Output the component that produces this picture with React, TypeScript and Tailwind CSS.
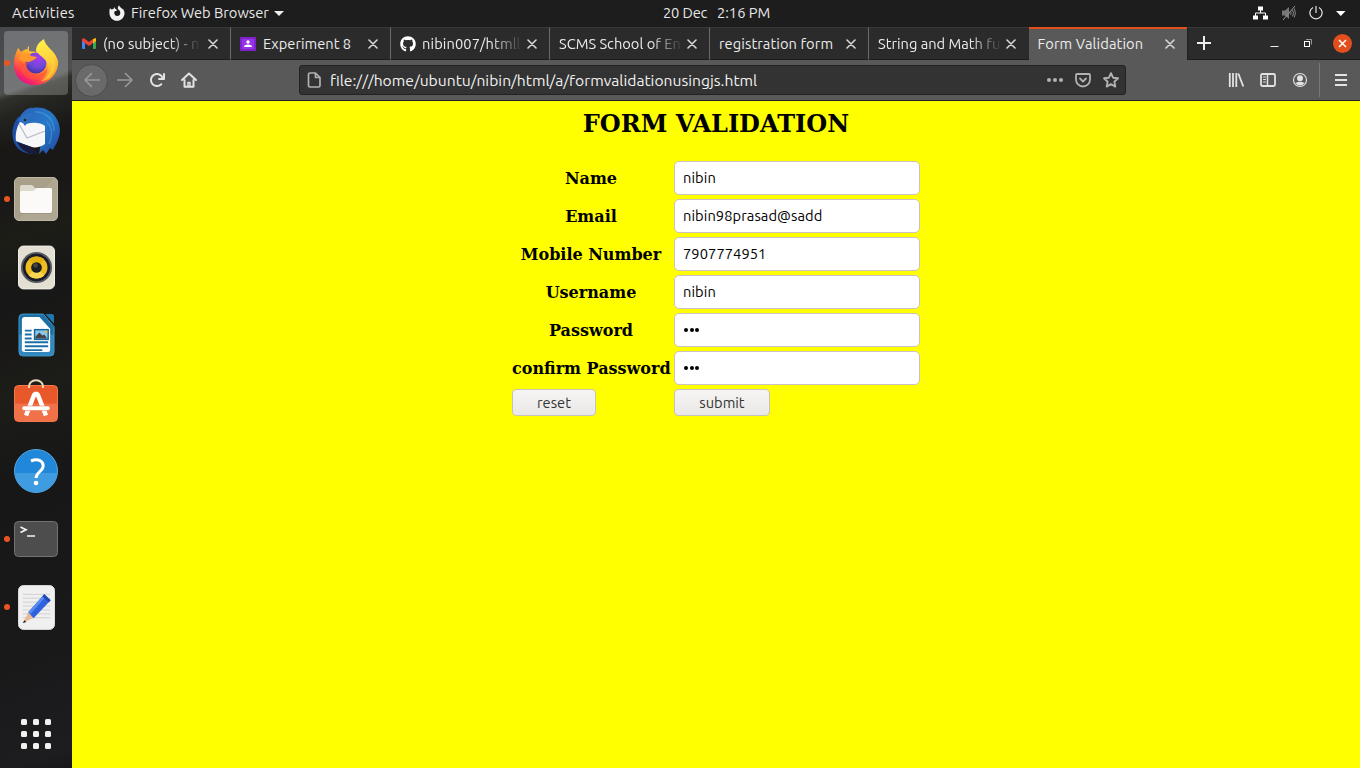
import type { ReactNode } from "react";
import { FaGithub } from "react-icons/fa";

const ui = "font-['Ubuntu','Noto_Sans',sans-serif] text-[14.667px] leading-5 whitespace-pre";

function Icon({ children, className = "", size = 16 }: { children: ReactNode; className?: string; size?: number }) {
  return (
    <svg width={size} height={size} viewBox={`0 0 ${size} ${size}`} fill="none" stroke="currentColor" strokeWidth="1.6" strokeLinecap="round" strokeLinejoin="round" className={`block shrink-0 ${className}`}>
      {children}
    </svg>
  );
}

function Close() {
  return (
    <svg width="10" height="10" viewBox="0 0 10 10" stroke="#d8d8d8" strokeWidth="1.6" strokeLinecap="round" className="block shrink-0">
      <path d="M1 1l8 8M9 1L1 9" />
    </svg>
  );
}

function FirefoxSymbol() {
  return (
    <svg width="16" height="16" viewBox="0 0 16 16" className="block shrink-0">
      <path fill="#f2f2f2" fillRule="evenodd" d="M1 3.2C1.4 3.4 2 3.9 2.4 4.5 3 4.2 3.800 3.900 4.600 4 4.600 3.200 5.200 2.500 5.800 2.200 5.700 3 6 3.600 6.800 4.300L8.200 4.900C7.900 5.600 6.900 5.900 6.100 6.100 5.500 6.500 5.500 6.900 5.300 7.500 5.100 9.800 6.500 11 8.200 11 10 11 11.300 9.700 11.300 8 11.300 6.300 10.300 5.300 9.300 4.600 8.500 3.500 8.800 1.300 10.100 0.200 10.300 1.900 11.800 2.300 12.800 3.500 13.100 3.900 13.300 4.200 13.400 4.500L13.700 3.500C14.900 5 15.600 6.700 15.500 8.500 15.300 12.600 12.100 15.800 8 15.800 3.900 15.800 0.600 12.600 0.500 8.500 0.400 6.600 0.400 4.600 1 3.200Z" />
    </svg>
  );
}

function TopBar() {
  return (
    <header className={`flex h-[27px] shrink-0 items-center bg-[#1d1d1d] pb-px text-[#e8e8e8] ${ui}`}>
      <div className="flex w-[663px] items-center pl-3">
        <span className="w-[97px] tracking-[0.25px]">Activities</span>
        <FirefoxSymbol />
        <span className="ml-1.5 w-[138px]">Firefox Web Browser</span>
        <svg width="10" height="5" className="ml-[5px]"><path d="M0 0h10L5 5z" fill="#eee" /></svg>
      </div>
      <div className="flex gap-[10px]">
        <span className="w-[44px] tracking-[-0.15px]">20 Dec</span>
        <span className="w-[53px]">2:16 PM</span>
      </div>
      <div className="flex flex-1 items-center justify-end pr-[14px]">
        <svg width="16" height="14" viewBox="0 0 16 14" className="mr-[13px]">
          <path fill="#fff" d="M5 0.500h5v4H5zM0 9.500h5v4H0zM10 9.500h5v4h-5z" />
          <path d="M7.500 4v3M2.500 10V7h10v3" fill="none" stroke="#fff" />
        </svg>
        <svg width="16" height="16" viewBox="0 0 16 16" fill="none" stroke="#858585" className="mr-[11px]">
          <path d="M0 5.500h3L7 2v12l-4-3.500H0z" fill="#777" stroke="none" />
          <path d="M13 1L1 15" stroke="#999" />
          <path d="M8.500 6q1.300 2 0 4M10.500 4.500q2 3.500 0 7M12.300 3.500q2.200 4.500 0 9" />
        </svg>
        <svg width="14" height="14" viewBox="0 0 14 14" fill="none" stroke="#e8e8e8" strokeWidth="1.200" className="mr-[13px]">
          <path d="M4 1.500a6.100 6.100 0 1 0 6 0M7 0v7" />
        </svg>
        <svg width="10" height="5"><path d="M0 0h9.500L4.800 5z" fill="#fff" /></svg>
      </div>
    </header>
  );
}

function FirefoxLogo() {
  return (
    <svg width="46" height="48" viewBox="0 0 46 48" className="mb-[2px] block">
      <defs>
        <linearGradient id="ffBody" x1="0.850" y1="0.100" x2="0.250" y2="0.950">
          <stop offset="0" stopColor="#fff24a" /><stop offset="0.350" stopColor="#ffb02c" /><stop offset="0.600" stopColor="#ff7a33" /><stop offset="0.850" stopColor="#fb2d5c" /><stop offset="1" stopColor="#e5158a" />
        </linearGradient>
        <radialGradient id="ffGlobe" cx="0.600" cy="0.250" r="0.750"><stop offset="0" stopColor="#a83bea" /><stop offset="0.600" stopColor="#7048d8" /><stop offset="1" stopColor="#4a32a8" /></radialGradient>
        <linearGradient id="ffTail" x1="0" y1="0" x2="0.300" y2="1"><stop offset="0" stopColor="#fff44f" /><stop offset="0.600" stopColor="#ffd43a" /><stop offset="1" stopColor="#ff9e2e" /></linearGradient>
      </defs>
      <path fill="url(#ffBody)" d="M5 10C6 11 7 12 8 14 10 12.500 12 11 15 11 14 9.500 15 9 16 8V13L24 14 38 15 42 17C47 29 41 46 23 47 8 47 0 37 1 24 1 19 3 15 5 10Z" />
      <circle cx="23" cy="25" r="10.500" fill="url(#ffGlobe)" />
      <path fill="url(#ffTail)" d="M31 1C32 9 42 12 45 23 46 34 38 43 28 43 35 38 38 31 33 23 30 19 25 16 23 13 23 8 26 4 31 1Z" />
      <path fill="#ff9a2a" d="M6 20C10 14 16 14 18 18L24 19C22 22 18 23 16 24 12 24 8 23 6 20Z" />
      <path fill="#ff5239" opacity="0.650" d="M7 23C10 28 13 24 16 24 11 28 14 36 23 37 28 37 32 34 34 30 34 40 24 44 15 40 8 36 6 30 7 23Z" />
      <path fill="#ffdc3e" opacity="0.600" d="M42 22C44 32 38 40 31 42 38 36 40 29 37 22Z" />
    </svg>
  );
}

function Thunderbird() {
  return (
    <svg width="50" height="50" viewBox="0 0 50 50" className="block">
      <defs><linearGradient id="tb" x1="0" y1="0" x2="1" y2="1"><stop offset="0" stopColor="#2b61b7" /><stop offset="0.500" stopColor="#2878c8" /><stop offset="1" stopColor="#2149a0" /></linearGradient></defs>
      <path fill="#1e4fa5" d="M8 10C-1 20-1 37 9 44 13 47 19 48 24 48L8 32Z" />
      <path fill="url(#tb)" d="M7 14C12 4 18 1 22 2 37-1 49 11 49 25 48 36 43 40 42 44L39 42 35 48 32 44 28 48 30 36 10 22Z" />
      <path fill="#f7f7f9" d="M9 16L15 18C22 16 29 16 34 20L34 38C30 41 25 42 20 41L5 35C4 28 6 20 9 16Z" />
      <path d="M8 18l8 14L34 25" fill="none" stroke="#b7bac2" strokeWidth="1.200" />
      <path fill="#2d6fc0" d="M8 14C13 6 20 6 25 8 17 11 17 17 14 20L12 17Z" />
      <path fill="#191b3a" d="M6 36L21 41 28 48C18 49 10 45 6 36Z" />
      <path fill="none" stroke="#5bc0f2" strokeWidth="1.500" opacity="0.350" d="M24 6C36 6 43 14 43 25M36 16c6 6 5 15 2 22" />
      <circle cx="14" cy="14" r="1.300" fill="#132" />
    </svg>
  );
}

function Files() {
  return (
    <svg width="44" height="44" viewBox="0 0 44 44" className="block">
      <rect x="0.500" y="0.500" width="43" height="43" rx="4.500" fill="#a9a08a" stroke="#beb7a5" />
      <path d="M40 0.500L4 43.500H40a3.500 3.500 0 0 0 3.500-3.500V4Z" fill="#b7af9b" opacity="0.450" />
      <path fill="#8a826f" opacity="0.500" d="M6 20h32v15q0 2-2 2H8q-2 0-2-2z" />
      <path fill="#dedacb" d="M6 17v-7q0-2 2-2h9q2 0 3 2l1 1h15q2 0 2 2v4z" />
      <path fill="#fbfaf8" d="M6 16q0-2 2-2h10q2 0 3-1.500 1-1.500 3-1.500h12q2 0 2 2v21q0 2-2 2H8q-2 0-2-2z" />
    </svg>
  );
}

function Rhythmbox() {
  return (
    <svg width="37" height="45" viewBox="0 0 38 46" className="block">
      <rect x="0.500" y="1" width="37" height="44" rx="5" fill="#e4dfd3" stroke="#f3f0e9" />
      <circle cx="19" cy="23" r="16" fill="#565b60" /><circle cx="19" cy="23" r="14" fill="#191b2b" />
      <circle cx="19" cy="23" r="11.300" fill="#f0bd20" /><path d="M11 15a11.300 11.300 0 0 1 16 0L19 23Z" fill="#e0b010" /><path d="M11 31a11.300 11.300 0 0 0 16 0L19 23Z" fill="#fad650" />
      <circle cx="19" cy="23" r="5.500" fill="#1c1d23" /><circle cx="18" cy="21" r="2.300" fill="#444" />
    </svg>
  );
}

function Writer() {
  return (
    <svg width="37" height="45" viewBox="0 0 38 46" className="block">
      <path d="M5 1h21l11 13v26q0 4-4 4H5q-4 0-4-4V5q0-4 4-4z" fill="#1d6fa5" stroke="#3f9bd0" />
      <path d="M1 22h36v18q0 4-4 4H5q-4 0-4-4z" fill="#3d94c9" opacity="0.700" />
      <path d="M7 4h15l11 12v22q0 2-2 2H7q-3 0-3-2V7q0-3 3-3z" fill="#fff" />
      <path d="M28 1h7q2 0 2 2v8z" fill="#1f77ae" />
      <path d="M7 18h7M7 22h7M7 26h7M7 30h24M7 34h24M7 38h18" stroke="#1b6fa8" strokeWidth="2" />
      <rect x="17" y="17" width="14" height="10" fill="#8bc7ea" stroke="#17669b" strokeWidth="1.500" />
      <path d="M18 26v-2l4-4 3 3 2-1 3 4z" fill="#444" /><path d="M27 18h3v3z" fill="#f6c400" />
    </svg>
  );
}

function Software() {
  return (
    <svg width="44" height="44" viewBox="0 0 44 44" className="mb-[5px] block">
      <rect x="0.500" y="6.500" width="43" height="36" rx="4" fill="#e9582a" stroke="#f5784d" />
      <path d="M1 24.500h42V39q0 3-3 3H4q-3 0-3-3z" fill="#f37850" opacity="0.800" />
      <path d="M15 9C14-1.500 30-1.500 29 9" fill="none" stroke="#e8d9ba" strokeWidth="2" />
      <path d="M12 36.500L20.500 15h3L32 36.500" fill="none" stroke="#fff" strokeWidth="4.500" strokeLinejoin="bevel" />
      <rect x="8" y="27" width="28" height="4.500" rx="2" fill="#fff" stroke="#e5673d" strokeWidth="0.500" />
    </svg>
  );
}

function Help() {
  return (
    <svg width="44" height="44" viewBox="0 0 44 44" className="block">
      <circle cx="22" cy="22" r="21.500" fill="#2187d8" stroke="#55a8e6" />
      <path d="M0.800 24A21.300 21.300 0 0 0 43.200 24z" fill="#3f9ce0" />
      <path d="M17 12C24 9 30 12 29 18 28.500 22 22.500 23 22 29" fill="none" stroke="#fff" strokeWidth="3" />
      <circle cx="22" cy="34" r="2.300" fill="#fff" />
    </svg>
  );
}

function TerminalIcon() {
  return (
    <svg width="44" height="36" viewBox="0 0 44 36" className="block">
      <rect x="0.500" y="0.500" width="43" height="35" rx="4" fill="#4d4d4d" stroke="#737373" />
      <path d="M6.500 6l5.500 2.700-5.500 2.700M13 15h8" fill="none" stroke="#f4f4f4" strokeWidth="1.700" />
    </svg>
  );
}

function Editor() {
  return (
    <svg width="37" height="45" viewBox="0 0 38 46" className="block">
      <rect x="0.500" y="0.500" width="37" height="45" rx="5" fill="#f0f0f0" stroke="#dedede" />
      <path d="M5 9.500h28M5 13.500h28M5 17.500h28M5 21.500h28M5 25.500h28M5 29.500h28M5 33.500h28" stroke="#d0d0d0" />
      <path d="M5 39L10.500 28 16 33.500Z" fill="#e8bb94" /><path d="M5 39l1.500-3 2 1.800z" fill="#222" />
      <path d="M10.500 28L27 9.500l6.500 6L16 34Z" fill="#2f63de" />
      <path d="M10.500 28L27 9.500l2 2L12.500 30Z" fill="#5a8cf0" /><path d="M25 11.500l2-2 6.500 6-2 2z" fill="#1f48b0" />
    </svg>
  );
}

function DockItem({ children, running = false, active = false }: { children: ReactNode; running?: boolean; active?: boolean }) {
  return (
    <div className="relative flex h-[68px] w-full items-center justify-center">
      <div className={active ? "flex h-16 w-16 items-center justify-center rounded-[4px] bg-[#ffffff38]" : "flex"}>{children}</div>
      {running && <span className="absolute top-[31px] left-1 h-[6px] w-[6px] rounded-full bg-[#e95420]" />}
    </div>
  );
}

function Dock() {
  return (
    <aside className="flex w-[72px] shrink-0 flex-col bg-[#181818] bg-[linear-gradient(160deg,#46484c_0px,#4d4f50_64px,#2f302a_70px,#242521_85px,#191817_115px,#191817_165px,#1d1d17_205px,#171717_250px,#191817_300px,#1c1c18_350px,#171717_430px,#19191a_600px,#1d1c1f_700px,#181718_100%)] pt-[2px]">
      <DockItem running active><FirefoxLogo /></DockItem>
      <DockItem><Thunderbird /></DockItem>
      <DockItem running><Files /></DockItem>
      <DockItem><Rhythmbox /></DockItem>
      <DockItem><Writer /></DockItem>
      <DockItem><Software /></DockItem>
      <DockItem><Help /></DockItem>
      <DockItem running><TerminalIcon /></DockItem>
      <DockItem running><Editor /></DockItem>
      <div className="mt-auto mb-[19px] grid grid-cols-3 gap-[6px] self-center">
        {Array.from({ length: 9 }, (_, i) => <span key={i} className="h-[6px] w-[6px] rounded-[1.500px] bg-[#f2f1f0]" />)}
      </div>
    </aside>
  );
}

function Tab({ title, icon, className = "", textClass = "", active = false, fade = false, divider = true }: { title: string; icon?: ReactNode; className?: string; textClass?: string; active?: boolean; fade?: boolean; divider?: boolean }) {
  return (
    <div className={`flex h-full shrink-0 items-center ${divider ? "pr-3" : "pr-[13px]"} ${active ? "border-t-2 border-[#e24f1c] bg-[#595959] pb-[1px]" : "border-y border-t-[#383838] border-b-[#1c1c1c]"} ${divider && !active ? "border-r border-r-[#6b6b6b]" : ""} ${className}`}>
      {icon}
      <span className={`min-w-0 flex-1 overflow-hidden text-[#ececec] ${textClass} ${fade ? "[mask-image:linear-gradient(to_left,transparent_0px,black_32px)]" : ""}`}>{title}</span>
      <Close />
    </div>
  );
}

const gmail = (
  <svg width="14" height="11" viewBox="0 0 14 11" className="mr-[7px] shrink-0">
    <path d="M0 2v8q0 1 1 1h2V4z" fill="#4285f4" /><path d="M14 2v8q0 1-1 1h-2V4z" fill="#34a853" />
    <path d="M11 1l3-1v3l-3 2.500z" fill="#fbbc04" /><path d="M0 1.500Q1-.5 3 1l4 3 4-3v4L7 8 0 3z" fill="#ea4335" />
  </svg>
);
const classroom = (
  <svg width="16" height="14" viewBox="0 0 16 14" className="mr-[7px] shrink-0">
    <rect width="16" height="14" rx="1" fill="#7e22ce" /><rect x="2" y="2" width="12" height="10" fill="#9334e6" />
    <circle cx="8" cy="5" r="1.700" fill="#fff" /><path d="M4 10q0-2.500 4-2.500t4 2.500z" fill="#fff" />
  </svg>
);

function TabStrip() {
  return (
    <div className="flex h-[33px] shrink-0 bg-[#2b2b2b]">
      <Tab title="(no subject) - ni" icon={gmail} className="w-[159px] pl-[10px]" textClass="mr-[7px]" fade />
      <Tab title="Experiment 8" icon={classroom} className="w-[160px] pl-[9px]" />
      <Tab title="nibin007/htmll" icon={<FaGithub size={16} color="#fff" className="mr-[6px] shrink-0" />} className="w-[159px] pl-[9px]" textClass="mr-[4px] tracking-[0.1px]" fade />
      <Tab title="SCMS School of En" className="w-[160px] pl-[9px]" textClass="mr-1" fade />
      <Tab title="registration form" className="w-[159px] pl-[9px]" textClass="tracking-[0.08px]" />
      <Tab title="String and Math fu" className="w-[160px] pl-[9px]" textClass="mr-1" fade divider={false} />
      <Tab title="Form Validation" active className="w-[158px] pl-[8.5px]" textClass="tracking-[0.1px]" />
      <div className="flex flex-1 items-center border-y border-t-[#383838] border-b-[#1c1c1c] border-l border-l-[#202020] pr-[8.5px] pl-[9px]">
        <svg width="14" height="14" stroke="#eee" strokeWidth="2" className="mb-px shrink-0"><path d="M7 0v14M0 7h14" /></svg>
        <div className="ml-auto flex items-center">
          <svg width="9" height="10" className="mr-[25px]"><path d="M0.500 7.500h8" stroke="#eee" /></svg>
          <svg width="9" height="9" fill="none" className="mr-[20px]"><rect x="0.500" y="2.500" width="5" height="5" stroke="#fff" /><path d="M2 .5h5.500v5" stroke="#999" /></svg>
          <span className="flex h-[19px] w-[19px] items-center justify-center rounded-full bg-[#e24f1c]">
            <svg width="9" height="9" stroke="#fff" strokeWidth="1.500"><path d="M1 1l7 7M8 1L1 8" /></svg>
          </span>
        </div>
      </div>
    </div>
  );
}

function Toolbar() {
  return (
    <div className="flex h-[41px] shrink-0 items-center border-b border-[#222] bg-[#595959] pr-[11px] pl-[3px] text-[#e2e2e2]">
      <div className="flex h-[33px] w-[33px] shrink-0 items-center justify-center rounded-full border border-[#4c4c4c] bg-[#6a6a6a] text-[#999]">
        <Icon><path d="M15.500 8H1M7.500 1.500L1 8l6.500 6.500" /></Icon>
      </div>
      <Icon className="ml-[9px] text-[#999]"><path d="M.5 8H15M8.500 1.500L15 8l-6.500 6.500" /></Icon>
      <Icon className="ml-4"><path fill="currentColor" stroke="none" d="M15 1a1 1 0 0 0-1 1v2.418A6.995 6.995 0 1 0 8 15a6.954 6.954 0 0 0 4.950-2.050 1 1 0 0 0-1.414-1.414A5.019 5.019 0 1 1 12.549 6H10a1 1 0 0 0 0 2h5a1 1 0 0 0 1-1V2a1 1 0 0 0-1-1z" /></Icon>
      <Icon className="ml-4"><path strokeWidth="2" d="M1 8l7-6.500L15 8M3.500 8v6.800h9V8" /><path strokeWidth="1.500" d="M7 14.500V10.500h2v4" /></Icon>
      <div className="ml-[102px] flex h-[30px] w-[827px] shrink-0 items-center rounded-[3px] border border-[#222] bg-[#333] pr-[6px] pl-[6px] text-[#b1b1b3]">
        <Icon><path d="M4 1h5.500L14 5.500V13.500q0 1.500-1.500 1.500h-8.500q-1.500 0-1.500-1.500v-11Q2.500 1 4 1zM9.500 1v4.500H14" strokeWidth="1.700" /></Icon>
        <span className="ml-[8px] flex-1 pb-px text-[15.670px] text-[#f1f1f1]">file:///home/ubuntu/nibin/html/a/formvalidationusingjs.html</span>
        <Icon><g fill="currentColor" stroke="none"><circle cx="2" cy="8" r="2" /><circle cx="8" cy="8" r="2" /><circle cx="14" cy="8" r="2" /></g></Icon>
        <Icon className="ml-3"><path d="M2 2h12q1 0 1 1v4.500a7 7 0 0 1-14 0V3q0-1 1-1zM5 6.500l3 3 3-3" strokeWidth="1.800" /></Icon>
        <Icon className="ml-3"><path d="M8 1.200l2.100 4.500 4.900.6-3.600 3.400.9 4.900L8 12.200l-4.300 2.400.9-4.900L1 6.300l4.900-.6z" strokeWidth="1.900" /></Icon>
      </div>
      <div className="ml-auto flex items-center">
        <Icon><path strokeLinecap="butt" strokeWidth="1.800" d="M1.800 1v14M5 1v14M8.300 1v14M10.300 1.500l5 13" /></Icon>
        <Icon className="ml-4"><rect x="1" y="2" width="14" height="12" rx="1.500" strokeWidth="1.800" /><path d="M7.500 2v12" strokeWidth="1.500" /><path d="M3.500 5h2M3.500 7.500h2M3.500 10h2" strokeWidth="1" /></Icon>
        <Icon className="ml-4"><circle cx="8" cy="8" r="6.500" strokeWidth="1.100" /><circle cx="8" cy="6.300" r="3" fill="currentColor" stroke="none" /><path d="M3.500 11Q8 8.500 12.500 11 10.500 13.500 8 13.500T3.500 11z" fill="currentColor" stroke="none" /></Icon>
        <span className="ml-[11px] h-[34px] w-px bg-[#777]" />
        <Icon className="ml-[13px]"><path d="M2 3h12M2 8h12M2 13h12" strokeLinecap="butt" strokeWidth="2" /></Icon>
      </div>
    </div>
  );
}

const fields = [
  { label: "Name", value: "nibin" },
  { label: "Email", value: "nibin98prasad@sadd" },
  { label: "Mobile Number", value: "7907774951" },
  { label: "Username", value: "nibin" },
  { label: "Password", dots: true },
  { label: "confirm Password", dots: true },
];

const button = "flex h-[27px] items-center justify-center rounded-[4px] border border-[#c8c2bc] bg-linear-to-b from-[#f6f5f4] to-[#e9e8e7] text-[#333]";

function FormPage() {
  return (
    <main className="flex flex-1 flex-col items-center bg-[#ffff00] text-black">
      <h2 className="mt-[9px] h-[28px] font-['DejaVu_Serif',serif] text-2xl leading-[28px] font-bold">FORM VALIDATION</h2>
      <form className="mt-[23px] grid grid-cols-[158px_246px] gap-x-[4px] gap-y-[4px]">
        {fields.map((f) => (
          <div key={f.label} className="contents">
            <label className="self-center text-center font-['DejaVu_Serif',serif] text-base leading-[19px] font-bold whitespace-nowrap">{f.label}</label>
            <div className="flex h-[34px] items-center rounded-[5px] border border-[#c9c4bf] bg-white pl-2">
              {f.dots ? (
                <span className="flex gap-[1.500px] pl-px">
                  {[0, 1, 2].map((i) => <i key={i} className="h-1 w-1 rounded-full bg-black" />)}
                </span>
              ) : <span className="tracking-[0.08px]">{f.value}</span>}
            </div>
          </div>
        ))}
        <button type="button" className={`${button} w-[84px]`}>reset</button>
        <button type="button" className={`${button} w-[96px]`}>submit</button>
      </form>
    </main>
  );
}

export default function App() {
  return (
    <div className={`flex h-screen w-full flex-col overflow-hidden ${ui}`}>
      <TopBar />
      <div className="flex min-h-0 flex-1">
        <Dock />
        <section className="flex min-w-0 flex-1 flex-col">
          <TabStrip />
          <Toolbar />
          <FormPage />
        </section>
      </div>
    </div>
  );
}
